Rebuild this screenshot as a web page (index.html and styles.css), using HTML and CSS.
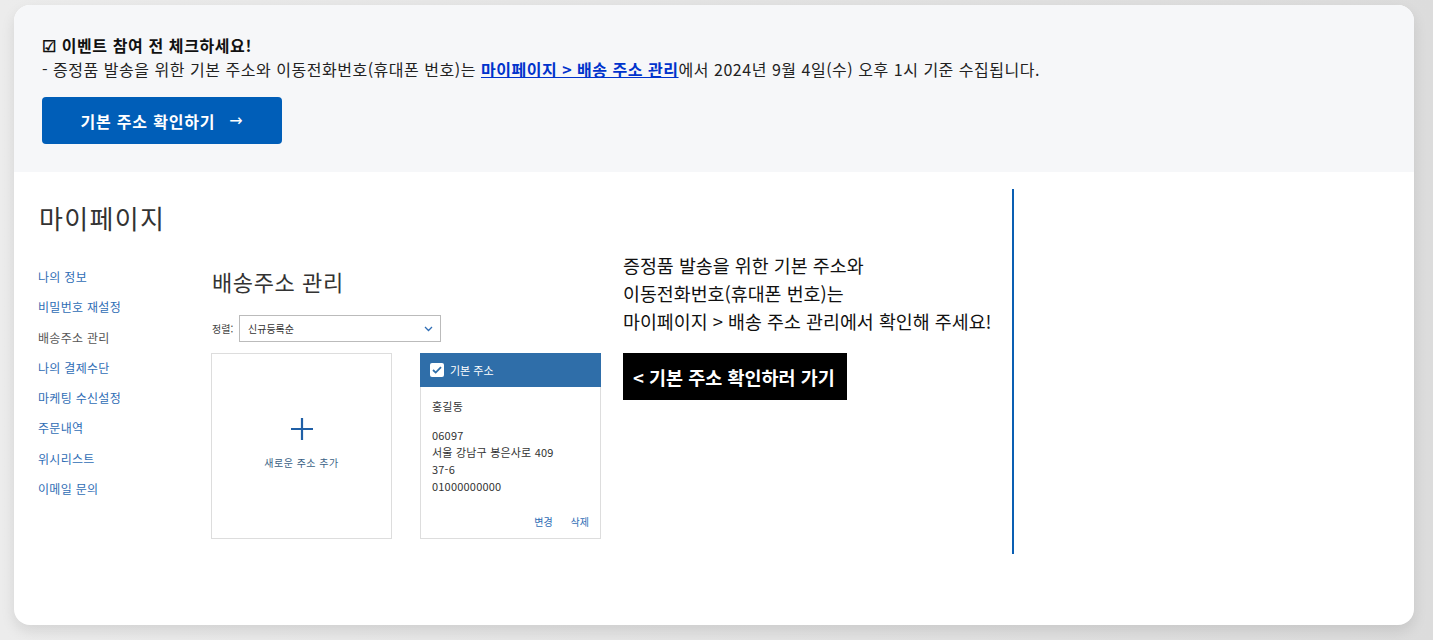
FILE: index.html
```html
<!DOCTYPE html>
<html lang="ko">
<head>
<meta charset="utf-8">
<title>이벤트 안내</title>
<link rel="stylesheet" href="styles.css">
</head>
<body>
<div class="card">
  <section class="notice">
    <p class="notice-title">☑ 이벤트 참여 전 체크하세요!</p>
    <p class="notice-text">- 증정품 발송을 위한 기본 주소와 이동전화번호(휴대폰 번호)는 <a class="notice-link" href="#">마이페이지 &gt; 배송 주소 관리</a>에서 2024년 9월 4일(수) 오후 1시 기준 수집됩니다.</p>
    <a class="notice-btn" href="#">기본 주소 확인하기 <span class="arrow">→</span></a>
  </section>
  <section class="lower">
    <div class="shot">
      <div class="mypage">
        <h1 class="mypage-title">마이페이지</h1>
        <div class="mypage-body">
          <ul class="menu">
            <li>나의 정보</li>
            <li>비밀번호 재설정</li>
            <li class="active">배송주소 관리</li>
            <li>나의 결제수단</li>
            <li>마케팅 수신설정</li>
            <li>주문내역</li>
            <li>위시리스트</li>
            <li>이메일 문의</li>
          </ul>
          <div class="addr">
            <h2 class="addr-title">배송주소 관리</h2>
            <div class="sort">
              <span class="sort-label">정렬:</span>
              <div class="sort-select">
                <span>신규등록순</span>
                <svg class="chev" width="9" height="6" viewBox="0 0 9 6"><path d="M1 1l3.5 3.5L8 1" fill="none" stroke="#2f6db5" stroke-width="1.3"/></svg>
              </div>
            </div>
            <div class="addr-cards">
              <div class="addr-card add-card">
                <svg width="24" height="24" viewBox="0 0 24 24"><path d="M12 1v22M1 12h22" stroke="#1f5fa6" stroke-width="2.2"/></svg>
                <span class="add-text">새로운 주소 추가</span>
              </div>
              <div class="addr-card default-card">
                <div class="default-head">
                  <span class="cbox"><svg width="10" height="8" viewBox="0 0 10 8"><path d="M1 4l2.7 2.6L9 1.2" fill="none" stroke="#2f6ea9" stroke-width="1.8"/></svg></span>
                  <span>기본 주소</span>
                </div>
                <div class="default-body">
                  <p class="name">홍길동</p>
                  <p class="lines">06097<br>서울 강남구 봉은사로 409<br>37-6<br>01000000000</p>
                </div>
                <div class="actions"><span>변경</span><span>삭제</span></div>
              </div>
            </div>
          </div>
        </div>
      </div>
      <div class="promo">
        <p class="promo-text">증정품 발송을 위한 기본 주소와<br>이동전화번호(휴대폰 번호)는<br>마이페이지 &gt; 배송 주소 관리에서 확인해 주세요!</p>
        <a class="promo-btn" href="#">&lt; 기본 주소 확인하러 가기</a>
      </div>
    </div>
    <div class="divider"></div>
  </section>
</div>
</body>
</html>
```
FILE: styles.css
```css
* { box-sizing: border-box; }
html, body { margin: 0; padding: 0; }
body {
  background: linear-gradient(90deg, #ececec 0%, #e2e2e2 60%, #dcdcdc 100%);
  height: 640px;
  overflow: hidden;
  font-family: "Noto Sans CJK KR", "Noto Sans", sans-serif;
  color: #222;
}
p, h1, h2, ul { margin: 0; padding: 0; }
ul { list-style: none; }
a { text-decoration: none; }

.card {
  margin: 5px 0 0 14px;
  width: 1400px;
  height: 620px;
  background: #fff;
  border-radius: 16px;
  overflow: hidden;
  box-shadow: 0 6px 14px rgba(0,0,0,0.10);
}

.notice {
  background: #f6f7f9;
  height: 167px;
  padding: 28px 28px 0 28px;
}
.notice-title {
  font-size: 16px;
  line-height: 24px;
  font-weight: 700;
  color: #111;
  letter-spacing: 0.6px;
}
.notice-text {
  font-size: 16px;
  line-height: 24px;
  color: #222;
  letter-spacing: 0.52px;
}
.notice-link {
  color: #0033cc;
  font-weight: 700;
  text-decoration: underline;
}
.notice-btn {
  margin-top: 16px;
  display: flex;
  align-items: center;
  justify-content: center;
  width: 240px;
  height: 47px;
  background: #005eb8;
  border-radius: 4px;
  color: #fff;
  font-size: 16px;
  font-weight: 700;
  letter-spacing: 0.8px;
}
.notice-btn .arrow { margin-left: 14px; font-weight: 400; font-family: "DejaVu Sans", sans-serif; }

.lower {
  display: flex;
  padding-top: 17px;
}
.shot {
  flex: 0 0 998px;
  display: flex;
}
.divider {
  width: 2px;
  height: 365px;
  background: #0a5fb3;
}

.mypage {
  flex: 0 0 587px;
  padding-left: 24px;
}
.mypage-title {
  margin: 11px 0 0 1px;
  font-size: 26px;
  line-height: 36px;
  font-weight: 400;
  color: #333;
  letter-spacing: 1.3px;
}
.mypage-body {
  display: flex;
  margin-top: 26px;
}
.menu {
  flex: 0 0 173px;
}
.menu li {
  font-size: 12px;
  line-height: 30.3px;
  color: #2f6db5;
  letter-spacing: 0.3px;
}
.menu li.active { color: #555; }

.addr { width: 390px; }
.addr-title {
  margin: 4px 0 0 1px;
  font-size: 22px;
  line-height: 30px;
  font-weight: 400;
  color: #333;
  letter-spacing: 0.6px;
}
.sort {
  margin-top: 19px;
  display: flex;
  align-items: center;
  padding-left: 1px;
}
.sort-label {
  font-size: 10px;
  color: #444;
  width: 27px;
}
.sort-select {
  width: 202px;
  height: 27px;
  border: 1px solid #bbb;
  display: flex;
  align-items: center;
  justify-content: space-between;
  padding: 0 7px 0 8px;
  font-size: 10px;
  color: #333;
}
.addr-cards {
  margin-top: 11px;
  display: flex;
  gap: 28px;
}
.addr-card {
  width: 181px;
  height: 186px;
  border: 1px solid #ddd;
  background: #fff;
}
.add-card {
  display: flex;
  flex-direction: column;
  align-items: center;
  justify-content: center;
  padding-bottom: 6px;
}
.add-text {
  margin-top: 14px;
  font-size: 10px;
  color: #3a5f85;
  letter-spacing: 0.5px;
}
.default-card {
  display: flex;
  flex-direction: column;
}
.default-head {
  height: 34px;
  background: #2f6ea9;
  margin: -1px -1px 0 -1px;
  display: flex;
  align-items: center;
  padding-left: 10px;
  color: #fff;
  font-size: 11px;
}
.cbox {
  width: 14px;
  height: 14px;
  background: #fff;
  border-radius: 2px;
  display: flex;
  align-items: center;
  justify-content: center;
  margin-right: 6px;
}
.default-body {
  padding: 11px 0 0 11px;
  font-size: 11px;
  color: #333;
  flex: 1;
  letter-spacing: 0.2px;
}
.name { line-height: 17px; }
.lines { margin-top: 12px; line-height: 17px; }
.actions {
  display: flex;
  justify-content: flex-end;
  gap: 18px;
  padding: 0 11px 9px 0;
  font-size: 10px;
  color: #2f6db5;
}

.promo {
  margin-left: 22px;
  padding-top: 62px;
}
.promo-text {
  font-size: 18.4px;
  line-height: 28px;
  letter-spacing: 0;
  color: #111;
}
.promo-btn {
  margin-top: 18px;
  display: flex;
  align-items: center;
  width: 224px;
  height: 47px;
  background: #000;
  color: #fff;
  font-size: 18.5px;
  font-weight: 700;
  letter-spacing: 0;
  padding-left: 10px;
}
```
